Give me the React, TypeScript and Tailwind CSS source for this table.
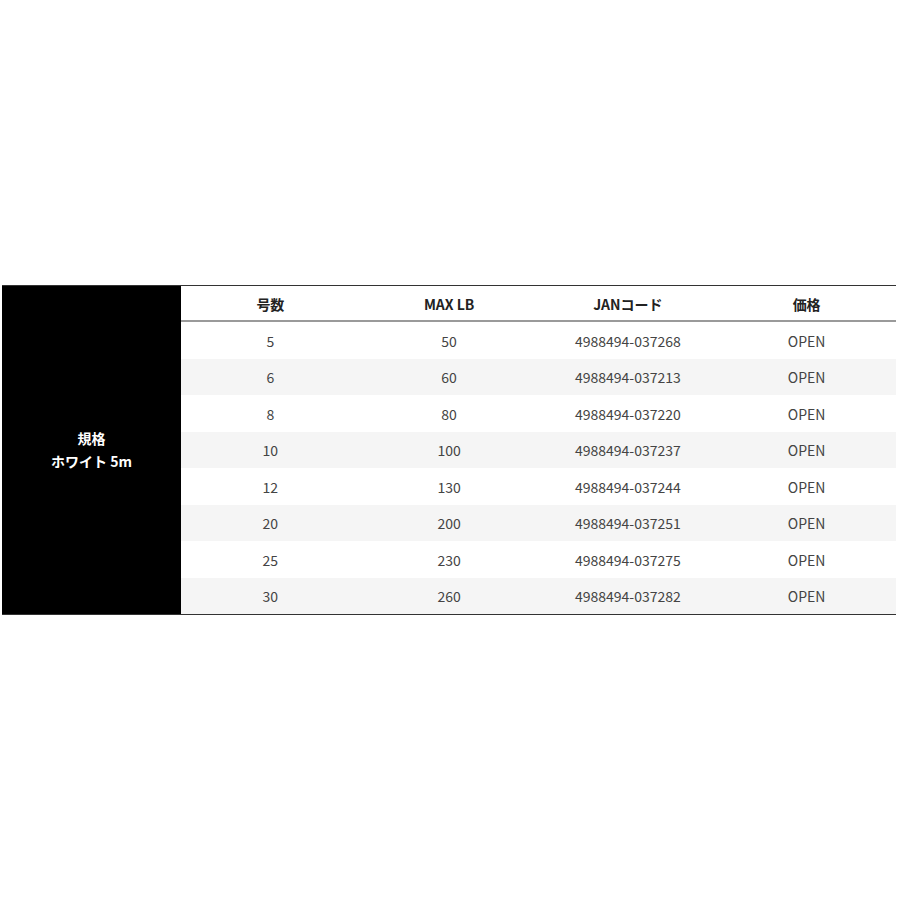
import React from 'react';

const rows = [
  ['5', '50', '4988494-037268', 'OPEN'],
  ['6', '60', '4988494-037213', 'OPEN'],
  ['8', '80', '4988494-037220', 'OPEN'],
  ['10', '100', '4988494-037237', 'OPEN'],
  ['12', '130', '4988494-037244', 'OPEN'],
  ['20', '200', '4988494-037251', 'OPEN'],
  ['25', '230', '4988494-037275', 'OPEN'],
  ['30', '260', '4988494-037282', 'OPEN'],
];

const headers = ['号数', 'MAX LB', 'JANコード', '価格'];

const App: React.FC = () => {
  return (
    <div
      className="w-[900px] h-[900px] bg-white pt-[285px] pl-[2px]"
      style={{ fontFamily: '"Noto Sans CJK JP", "Noto Sans", sans-serif' }}
    >
      <div className="w-[894px] flex border-t border-b border-[#333]">
        {/* 左の見出しセル */}
        <div className="w-[179px] bg-black flex flex-col items-center justify-center text-white font-bold text-[14px] leading-[23px]">
          <span>規格</span>
          <span>ホワイト 5m</span>
        </div>

        <div className="flex-1">
          <div className="grid grid-cols-4 h-[36px] pt-[2px] items-center text-center border-b-2 border-[#9a9a9a] font-bold text-[14px] text-[#222]">
            {headers.map(h => (
              <div key={h}>{h}</div>
            ))}
          </div>
          {rows.map((r, i) => (
            <div
              key={r[2]}
              className={`grid grid-cols-4 h-[36.5px] pt-[2px] items-center text-center text-[14px] text-[#444] ${
                i % 2 === 1 ? 'bg-[#f5f5f5]' : 'bg-white'
              }`}
            >
              {r.map((c, j) => (
                <div key={j}>{c}</div>
              ))}
            </div>
          ))}
        </div>
      </div>
    </div>
  );
};

export default App;
